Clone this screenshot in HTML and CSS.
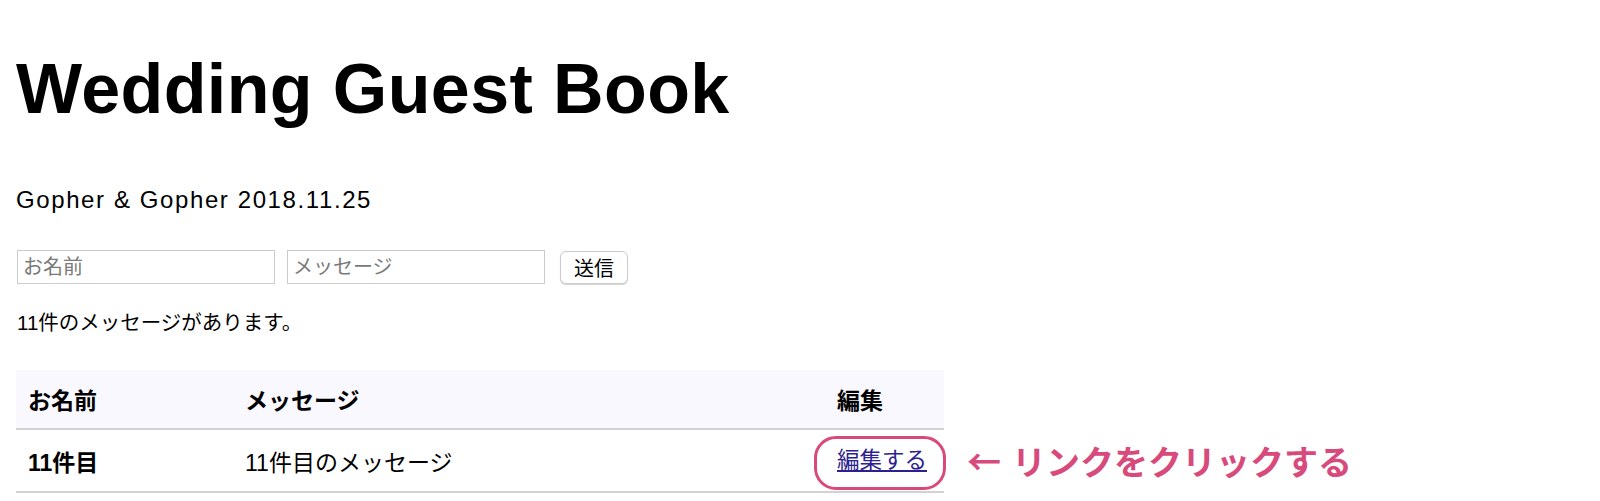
FILE: index.html
```html
<!DOCTYPE html>
<html lang="ja">
<head>
<meta charset="utf-8">
<title>Wedding Guest Book</title>
<link rel="stylesheet" href="styles.css">
</head>
<body>
<h1 class="title">Wedding Guest Book</h1>
<p class="subtitle">Gopher &amp; Gopher 2018.11.25</p>
<form class="post-form">
  <input class="field" type="text" placeholder="お名前">
  <input class="field" type="text" placeholder="メッセージ">
  <button class="send" type="button">送信</button>
</form>
<p class="count">11件のメッセージがあります。</p>
<div class="table-area">
  <table class="guests">
    <colgroup>
      <col class="col-name">
      <col class="col-msg">
      <col class="col-edit">
    </colgroup>
    <thead>
      <tr><th>お名前</th><th>メッセージ</th><th>編集</th></tr>
    </thead>
    <tbody>
      <tr>
        <td class="name">11件目</td>
        <td>11件目のメッセージ</td>
        <td><span class="mark"><a class="edit-link" href="#">編集する</a></span></td>
      </tr>
    </tbody>
  </table>
  <div class="note"><span class="arrow">←</span>リンクをクリックする</div>
</div>
</body>
</html>
```
FILE: styles.css
```css
html, body {
  background: #ffffff;
}
body {
  margin: 0;
  padding: 0 16px;
  color: #000;
  font-family: "Liberation Sans", "Noto Sans CJK JP", sans-serif;
}
.title {
  margin: 53px 0 0 0;
  font-size: 70px;
  line-height: 72px;
  font-weight: 700;
  letter-spacing: 0.4px;
}
.subtitle {
  margin: 63px 0 0 0;
  font-size: 24px;
  line-height: 24px;
  letter-spacing: 1.6px;
}
.post-form {
  margin-top: 38px;
  display: flex;
  align-items: flex-start;
  gap: 12px;
  padding-left: 1px;
}
.field {
  box-sizing: border-box;
  width: 258px;
  height: 34px;
  margin: 0;
  padding: 0 5px;
  border: 1px solid #cccccc;
  border-radius: 0;
  font-family: "Liberation Sans", "Noto Sans CJK JP", sans-serif;
  font-size: 20px;
  color: #000;
  outline: none;
}
.field::placeholder {
  color: #7a7a7a;
}
.send {
  box-sizing: border-box;
  margin: 1px 0 0 3px;
  width: 68px;
  height: 33px;
  padding: 0;
  border: 1px solid #cbcbcb;
  border-radius: 6px;
  background: #ffffff;
  box-shadow: 0 1px 1px rgba(0, 0, 0, 0.18);
  font-family: "Liberation Sans", "Noto Sans CJK JP", sans-serif;
  font-size: 20px;
  color: #000;
}
.count {
  margin: 28px 0 0 1px;
  font-size: 20.5px;
  line-height: 21px;
}
.table-area {
  margin-top: 37px;
  display: flex;
  align-items: flex-end;
}
.guests {
  width: 928px;
  border-collapse: collapse;
  table-layout: fixed;
  font-size: 23px;
}
.col-name { width: 217px; }
.col-msg { width: 592px; }
.col-edit { width: 119px; }
.guests th {
  height: 58px;
  padding: 0 12px;
  text-align: left;
  font-weight: 700;
  background: #f8f8fe;
  border-bottom: 2px solid #d2d2d2;
}
.guests td {
  height: 61px;
  padding: 0 12px;
  border-bottom: 2px solid #d2d2d2;
}
.guests td.name {
  font-weight: 700;
}
.mark {
  position: relative;
  display: inline-block;
  line-height: 23px;
  font-size: 22.5px;
}
.mark::after {
  content: "";
  position: absolute;
  left: -23px;
  right: -19px;
  top: -13px;
  bottom: -18px;
  border: 3px solid #d84a7c;
  border-radius: 22px;
}
.edit-link {
  color: #2d1f8f;
  text-decoration: underline;
}
.note {
  margin: 0 0 15px 23px;
  font-family: "Noto Sans CJK JP", sans-serif;
  font-size: 34px;
  line-height: 34px;
  font-weight: 700;
  color: #d84a7c;
  white-space: nowrap;
}
.arrow {
  margin-right: 11px;
}
```
